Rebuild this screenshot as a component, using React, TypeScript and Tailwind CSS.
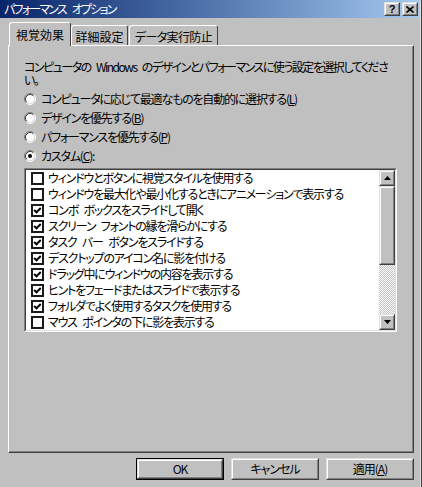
const items: [boolean, string][] = [
  [false, 'ウィンドウとボタンに視覚スタイルを使用する'],
  [false, 'ウィンドウを最大化や最小化するときにアニメーションで表示する'],
  [true, 'コンボ ボックスをスライドして開く'],
  [true, 'スクリーン フォントの縁を滑らかにする'],
  [true, 'タスク バー ボタンをスライドする'],
  [true, 'デスクトップのアイコン名に影を付ける'],
  [true, 'ドラッグ中にウィンドウの内容を表示する'],
  [true, 'ヒントをフェードまたはスライドで表示する'],
  [true, 'フォルダでよく使用するタスクを使用する'],
  [false, 'マウス ポインタの下に影を表示する'],
]

function Radio({ checked }: { checked?: boolean }) {
  return (
    <svg width="12" height="12" viewBox="0 0 12 12" className="shrink-0">
      <circle cx="6" cy="6" r="4.5" fill="#fff" />
      <path d="M9.89 2.11A5.5 5.5 0 0 0 2.11 9.89" fill="none" stroke="#808080" />
      <path d="M2.11 9.89A5.5 5.5 0 0 0 9.89 2.11" fill="none" stroke="#fff" />
      <path d="M9.18 2.82A4.5 4.5 0 0 0 2.82 9.18" fill="none" stroke="#404040" />
      <path d="M2.82 9.18A4.5 4.5 0 0 0 9.18 2.82" fill="none" stroke="#dfdfdf" />
      {checked && <circle cx="6" cy="6" r="2" fill="#000" />}
    </svg>
  )
}

function Check({ checked }: { checked: boolean }) {
  return (
    <div className="flex h-[13px] w-[13px] shrink-0 items-center justify-center border-2 border-[#1a1a1a] bg-white">
      {checked && (
        <svg width="9" height="9" viewBox="0 0 9 9">
          <polyline points="1.2,4 3.5,6.3 7.8,2" fill="none" stroke="#000" strokeWidth="2" />
        </svg>
      )}
    </div>
  )
}

function Arrow({ down }: { down?: boolean }) {
  return (
    <svg width="7" height="4" viewBox="0 0 7 4">
      <polygon points={down ? '0,0 7,0 3.5,4' : '3.5,0 7,4 0,4'} fill="#000" />
    </svg>
  )
}

function Raised({ className = '', children }: { className?: string; children?: React.ReactNode }) {
  return (
    <div
      className={`border border-t-[#dfdfdf] border-l-[#dfdfdf] border-r-[#404040] border-b-[#404040] bg-[#c0c0c0] ${className}`}
    >
      <div className="flex h-full w-full items-center justify-center border border-t-white border-l-white border-r-[#808080] border-b-[#808080]">
        {children}
      </div>
    </div>
  )
}

function DialogButton({ children, isDefault }: { children: React.ReactNode; isDefault?: boolean }) {
  return (
    <div className={`h-[22px] w-[88px] ${isDefault ? 'border border-black' : ''}`}>
      <Raised className="h-full w-full">
        <span className="text-[12px] leading-none tracking-[-1px]">{children}</span>
      </Raised>
    </div>
  )
}

export default function App() {
  return (
    <div className="flex h-[487px] w-[422px] overflow-hidden bg-[#c0c0c0] font-['Noto_Sans_CJK_JP',sans-serif] text-[12px] text-black [font-feature-settings:'palt']">
      <div className="flex flex-1 flex-col">
        {/* title bar */}
        <div className="flex h-[18px] items-center bg-linear-to-r from-[#0a246a] to-[#a6caf0] pr-[2px] pl-[4px]">
          <span className="flex-1 text-[12px] leading-none tracking-[-1.8px] text-white [word-spacing:5px]">
            パフォーマンス オプション
          </span>
          <div className="flex gap-[2px]">
            <Raised className="h-[14px] w-[16px]">
              <span className="font-['Liberation_Sans',sans-serif] text-[11px] leading-none font-bold">?</span>
            </Raised>
            <Raised className="h-[14px] w-[16px]">
              <svg width="8" height="7" viewBox="0 0 8 7">
                <path d="M0.5 0.5L7.5 6.5M7.5 0.5L0.5 6.5" stroke="#000" strokeWidth="1.6" />
              </svg>
            </Raised>
          </div>
        </div>

        <div className="flex flex-1 flex-col pt-[4px] pr-[6px] pl-[8px]">
          {/* tabs */}
          <div className="relative z-10 -mb-px flex h-[24px] items-end pl-px">
            <div className="flex h-[24px] w-[62px] items-start justify-center rounded-t-[3px] border-t border-r border-l border-t-white border-r-[#404040] border-l-white bg-[#c0c0c0] pt-[5px]">
              <span className="leading-[13px]">視覚効果</span>
            </div>
            <div className="mb-px flex h-[20px] w-[57px] items-start justify-center rounded-t-[3px] border-t border-r border-l border-t-white border-r-[#404040] border-l-white pt-[4px]">
              <span className="leading-[13px]">詳細設定</span>
            </div>
            <div className="mb-px ml-px flex h-[20px] w-[89px] items-start justify-center rounded-t-[3px] border-t border-r border-l border-t-white border-r-[#404040] border-l-white pt-[4px]">
              <span className="leading-[13px] tracking-[-0.6px]">データ実行防止</span>
            </div>
          </div>

          {/* tab panel */}
          <div className="h-[408px] border border-t-white border-r-[#404040] border-b-[#404040] border-l-white">
            <div className="flex h-full flex-col border-r border-b border-[#808080] pt-[14px] pr-[14px] pl-[15px] tracking-[-1.2px] [word-spacing:4px]">
              <p className="leading-[13px] tracking-[-1.5px] whitespace-nowrap">
                <span className="block">コンピュータの Windows のデザインとパフォーマンスに使う設定を選択してくださ</span>
                <span className="block">い。</span>
              </p>

              <div className="mt-[3px] flex flex-col">
                {[
                  ['コンピュータに応じて最適なものを自動的に選択する(', 'L', ')'],
                  ['デザインを優先する(', 'B', ')'],
                  ['パフォーマンスを優先する(', 'P', ')'],
                  ['カスタム(', 'C', '):'],
                ].map(([a, k, b], i) => (
                  <div key={i} className="flex h-[19px] items-center gap-[5px]">
                    <Radio checked={i === 3} />
                    <span className="leading-none">
                      {a}
                      <u>{k}</u>
                      {b}
                    </span>
                  </div>
                ))}
              </div>

              {/* list box */}
              <div className="mt-[3px] w-[373px] border border-t-[#808080] border-r-white border-b-white border-l-[#808080]">
                <div className="flex h-[162px] border border-t-[#404040] border-r-[#dfdfdf] border-b-[#dfdfdf] border-l-[#404040] bg-white">
                  <div className="flex flex-1 flex-col pl-[5px]">
                    {items.map(([c, t], i) => (
                      <div key={i} className="flex h-[16px] items-center gap-[4px]">
                        <Check checked={c} />
                        <span className="leading-none whitespace-nowrap">{t}</span>
                      </div>
                    ))}
                  </div>
                  {/* scrollbar */}
                  <div className="flex w-[16px] flex-col">
                    <Raised className="h-[16px] w-[16px]">
                      <Arrow />
                    </Raised>
                    <div className="flex-1 bg-[repeating-conic-gradient(#fff_0_25%,#c0c0c0_0_50%)] bg-[length:2px_2px]">
                      <Raised className="h-[79px] w-[16px]" />
                    </div>
                    <Raised className="h-[16px] w-[16px]">
                      <Arrow down />
                    </Raised>
                  </div>
                </div>
              </div>
            </div>
          </div>

          {/* buttons */}
          <div className="mt-[5px] flex justify-end gap-[7px]">
            <DialogButton isDefault>OK</DialogButton>
            <DialogButton>キャンセル</DialogButton>
            <DialogButton>
              適用(<u>A</u>)
            </DialogButton>
          </div>
        </div>
      </div>
      <div className="w-px bg-[#dfdfdf]" />
      <div className="w-px bg-[#404040]" />
    </div>
  )
}
